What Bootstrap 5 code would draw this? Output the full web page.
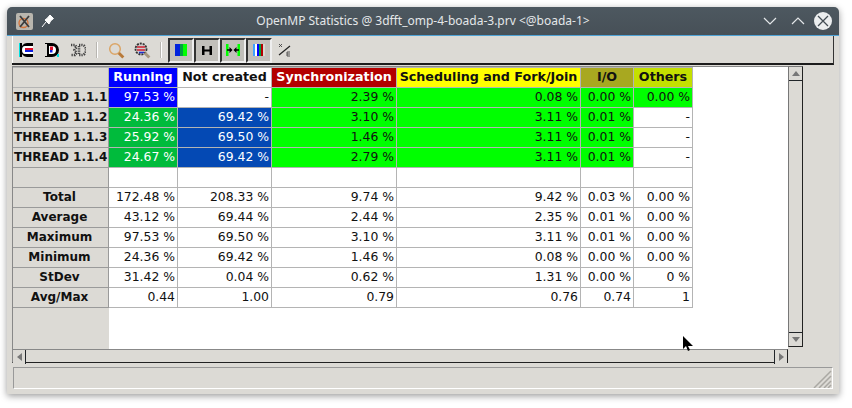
<!DOCTYPE html>
<html lang="en">
<head>
  <meta charset="UTF-8" />
  <title>OpenMP Statistics</title>
  <link href="https://cdn.jsdelivr.net/npm/bootstrap@5.3.0/dist/css/bootstrap.min.css" rel="stylesheet">
  <style>
    body { background: #fff; margin: 0; font-family: "DejaVu Sans", sans-serif; overflow: hidden; }
    .app-window { position: absolute; left: 7px; top: 7px; width: 832px; height: 387px; background: #dcdad5; border-radius: 5px 5px 0 0; box-shadow: 0 2px 7px rgba(0,0,0,.4); }
    .title-bar { position: relative; height: 29px; background: linear-gradient(#4d5860, #475057); border-bottom: 1px solid #4fa3d6; border-radius: 5px 5px 0 0; color: #e4e7e9; font-family: "Noto Sans", sans-serif; font-size: 12px; padding: 0 7px 0 9px; }
    .title-text { left: 0; right: 0; top: 6px; text-align: center; line-height: 16px; }
    .app-badge { width: 17px; height: 17px; background: #b9b6ae; border-radius: 2px; }
    .close-btn { width: 18px; height: 18px; background: #eceeef; border-radius: 50%; }
    .tool-bar { height: 29px; margin: 0 5px; padding: 2px 0 1px 1px; border-bottom: 2px solid #1c1c1c; border-right: 1px solid #333; box-shadow: inset 1px 0 #fff; }
    .tool-btn { width: 26px; height: 25px; }
    .tool-btn.on { background: #c1bfba; border: 2px solid #333; border-right-color: #eee; border-bottom-color: #eee; }
    .tool-sep { width: 2px; height: 16px; background: #b8b6b1; border-right: 1px solid #fff; margin: 0 5px; }
    .sep-wide { margin-right: 6px; }
    .stats-row { height: 283px; margin: 1px 0 0 5px; }
    .stats-pane { width: 776px; height: 283px; background: #fff; border-left: 1px solid #888; border-top: 1px solid #888; overflow: hidden; }
    .stats-grid { border-collapse: collapse; table-layout: fixed; width: 680px; margin-left: -1px; font-size: 12.4px; line-height: 15px; color: #111; }
    .stats-grid td, .stats-grid th { border: 1px solid #b4b4b4; height: 20px; padding: 0 2px 2px; white-space: nowrap; text-align: right; font-weight: 400; overflow: hidden; }
    .stats-grid th.head { text-align: center; font-weight: 700; font-size: 12.7px; padding: 0 0 3px; }
    .stats-grid th.side { background: #dcdad5; color: #111; font-weight: 700; font-size: 12px; text-align: left; padding: 0 0 0 1px; border-color: #f4f4f4 #9a9a9a #9a9a9a #f4f4f4; }
    .stats-grid th.side.mid { text-align: center; padding: 0 2px 0 0; }
    .stats-grid th.corner { background: #dcdad5; }
    .stats-grid tr.tail td, .stats-grid tr.tail th { border: 0; height: 42px; }
    .stats-grid tr.tail th { background: #dcdad5; }
    .c-run { background: #0000ff; color: #fff; }
    .c-not { background: #fff; color: #111; }
    .c-sync { background: #b30000; color: #fff; }
    .c-sched { background: #ffff00; color: #111; }
    .c-io { background: #a8a820; color: #111; }
    .c-other { background: #c4e000; color: #111; }
    .c-blue { background: #0000ff; color: #fff; }
    .c-teal { background: #00bb3c; color: #fff; }
    .c-navy { background: #0449b4; color: #fff; }
    .c-lime { background: #00ff00; color: #111; }
    .v-bar { width: 15px; height: 281px; background: #dcdad5; border: 1px solid #777; border-right-color: #222; border-bottom-color: #222; }
    .h-bar { width: 776px; height: 14px; margin-left: 5px; background: #dcdad5; border: 1px solid #888; border-bottom: 1px solid #222; border-right-color: #222; }
    .bar-end { width: 13px; height: 14px; background: #dcdad5; }
    .arrow-up { width: 0; height: 0; border: 4px solid transparent; border-top: 0; border-bottom: 5px solid #777; }
    .arrow-down { width: 0; height: 0; border: 4px solid transparent; border-bottom: 0; border-top: 5px solid #777; }
    .arrow-left { width: 0; height: 0; border: 4px solid transparent; border-left: 0; border-right: 5px solid #777; }
    .arrow-right { width: 0; height: 0; border: 4px solid transparent; border-right: 0; border-left: 5px solid #777; }
    .status-bar { height: 22px; margin: 4px 6px 0 6px; border: 1px solid #999; border-right-color: #fff; border-bottom-color: #fff; position: relative; }
    .grip { position: absolute; right: 0; bottom: 0; }
    .mouse-ptr { position: absolute; left: 683px; top: 336px; }
  </style>
</head>
<body>
  <div class="app-window">
    <div class="title-bar d-flex align-items-center">
      <span class="title-text position-absolute">OpenMP Statistics @ 3dfft_omp-4-boada-3.prv &lt;@boada-1&gt;</span>
      <span class="app-badge d-flex align-items-center justify-content-center">
        <svg width="15" height="15" viewBox="0 0 15 15"><circle cx="6.500" cy="9" r="4.500" fill="none" stroke="#d8743a" stroke-width="1.300"/><path d="M3 2l9 11M12 2L3 13" stroke="#3c3c3c" stroke-width="1.800"/></svg>
      </span>
      <svg class="ms-2" width="14" height="14" viewBox="0 0 14 14"><path d="M1 13l4-5M4 6l4 4 1.500-3 3-2.500L9 1 6.500 4z" fill="#fff" stroke="#fff" stroke-linejoin="round"/></svg>
      <span class="ms-auto d-flex align-items-center gap-2">
        <svg width="16" height="10" viewBox="0 0 16 10"><path d="M2 2l6 6 6-6" fill="none" stroke="#e4e7e9" stroke-width="1.200"/></svg>
        <svg class="ms-1" width="16" height="10" viewBox="0 0 16 10"><path d="M2 8l6-6 6 6" fill="none" stroke="#e4e7e9" stroke-width="1.200"/></svg>
        <span class="close-btn d-flex align-items-center justify-content-center">
          <svg width="12" height="12" viewBox="0 0 12 12"><path d="M1 1l10 10M11 1L1 11" stroke="#444d54" stroke-width="1.300"/></svg>
        </span>
      </span>
    </div>

    <div class="tool-bar d-flex align-items-center">
      <span class="tool-btn d-flex align-items-center justify-content-center">
        <svg width="14" height="14" viewBox="0 0 14 14"><path d="M0 0h1v14H0z" fill="#00e0e0"/><path d="M1 0h2v14H1z" fill="#000"/><path d="M14 0H8a6 7 0 0 0 0 14h6v-3H8.500a3 4 0 0 1 0-8H14z" fill="#000"/><path d="M6 3h8v8H6a3 4 0 0 1 0-8z" fill="#fff"/><path d="M6 5h8v2H6z" fill="#e0102a"/><path d="M6 7h8v2H6z" fill="#1020e0"/></svg>
      </span>
      <span class="tool-btn d-flex align-items-center justify-content-center">
        <svg width="14" height="14" viewBox="0 0 14 14"><path d="M0 0h7a7 7 0 0 1 0 14H0v-1h2V1H0z" fill="#000"/><path d="M4 3h3a4 4 0 0 1 0 8H4z" fill="#fff"/><path d="M5 3.500h3v3.500H5z" fill="#e0102a"/><path d="M5 7h2.500v2.500H5z" fill="#1020e0"/><path d="M12 11h2v3h-2z" fill="#00e0e0"/></svg>
      </span>
      <span class="tool-btn d-flex align-items-center justify-content-center">
        <svg width="16" height="14" viewBox="0 0 16 14"><path d="M1 2h4l1.500 2-2 3 2 3L5 12H1M9 2h3a4 5 0 0 1 0 10H9z" fill="none" stroke="#444" stroke-width="2.600" stroke-dasharray="1.300 1"/></svg>
      </span>
      <span class="tool-sep"></span>
      <span class="tool-btn d-flex align-items-center justify-content-center">
        <svg width="17" height="17" viewBox="0 0 17 17"><circle cx="7" cy="7" r="5.300" fill="none" stroke="#dba566" stroke-width="1.500"/><path d="M10.800 11l4.500 4.500" stroke="#b87a3a" stroke-width="3"/></svg>
      </span>
      <span class="tool-btn d-flex align-items-center justify-content-center">
        <svg width="17" height="17" viewBox="0 0 17 17"><circle cx="7" cy="7" r="5.500" fill="#cfcfcf" stroke="#333" stroke-width="1.800" stroke-dasharray="2 1"/><path d="M3 5h8M3 8h8" stroke="#d02030" stroke-width="1.500"/><path d="M5 10.500h5" stroke="#2030d0" stroke-width="1.500"/><path d="M10.800 11l4.500 4.500" stroke="#a89880" stroke-width="3"/></svg>
      </span>
      <span class="tool-sep sep-wide"></span>
      <span class="tool-btn on d-flex align-items-center justify-content-center">
        <svg width="12" height="12" viewBox="0 0 12 12"><path d="M0 0h5v12H0z" fill="#0022dd"/><path d="M5 0h3v12H5z" fill="#00a040"/><path d="M8 0h4v12H8z" fill="#00ff00"/></svg>
      </span>
      <span class="tool-btn on d-flex align-items-center justify-content-center">
        <svg width="10" height="9" viewBox="0 0 10 9"><path d="M0 0h2.500v3.500h5V0H10v9H7.500V5.500h-5V9H0z" fill="#000"/></svg>
      </span>
      <span class="tool-btn on d-flex align-items-center justify-content-center">
        <svg width="14" height="12" viewBox="0 0 14 12"><path d="M0 0h2.500v12H0zM11.500 0H14v12h-2.500z" fill="#00ff00"/><path d="M1 6h4M13 6H9" stroke="#000" stroke-width="1.300"/><path d="M3.500 3l3 3-3 3zM10.500 3l-3 3 3 3z" fill="#000"/></svg>
      </span>
      <span class="tool-btn on d-flex align-items-center justify-content-center">
        <svg width="12" height="12" viewBox="0 0 12 12"><path d="M0 0h2v12H0z" fill="#40a0ff"/><path d="M2 0h2v12H2z" fill="#fff"/><path d="M4 0h2v12H4z" fill="#0000ff"/><path d="M6 0h2v12H6z" fill="#00a040"/><path d="M8 0h2v12H8z" fill="#b30000"/><path d="M10 0h2v12h-2z" fill="#d8d8d0"/></svg>
      </span>
      <span class="tool-btn d-flex align-items-center justify-content-center">
        <svg width="14" height="14" viewBox="0 0 14 14"><path d="M1 12L12 3" stroke="#222" stroke-width="1.200"/><path d="M1 1l3 3M4 1L1 4M9 9h3M9 11h3M9 13h3M9 9v4" fill="none" stroke="#444" stroke-width=".9"/></svg>
      </span>
    </div>

    <div class="stats-row d-flex">
      <div class="stats-pane">
        <table class="stats-grid">
          <colgroup><col style="width:96px"><col style="width:69px"><col style="width:94px"><col style="width:125px"><col style="width:184px"><col style="width:53px"><col style="width:59px"></colgroup>
          <tr>
            <th class="corner"></th>
            <th class="head c-run">Running</th><th class="head c-not">Not created</th><th class="head c-sync">Synchronization</th><th class="head c-sched">Scheduling and Fork/Join</th><th class="head c-io">I/O</th><th class="head c-other">Others</th>
          </tr>
          <tr><th class="side">THREAD 1.1.1</th><td class="c-blue">97.53 %</td><td>-</td><td class="c-lime">2.39 %</td><td class="c-lime">0.08 %</td><td class="c-lime">0.00 %</td><td class="c-lime">0.00 %</td></tr>
          <tr><th class="side">THREAD 1.1.2</th><td class="c-teal">24.36 %</td><td class="c-navy">69.42 %</td><td class="c-lime">3.10 %</td><td class="c-lime">3.11 %</td><td class="c-lime">0.01 %</td><td>-</td></tr>
          <tr><th class="side">THREAD 1.1.3</th><td class="c-teal">25.92 %</td><td class="c-navy">69.50 %</td><td class="c-lime">1.46 %</td><td class="c-lime">3.11 %</td><td class="c-lime">0.01 %</td><td>-</td></tr>
          <tr><th class="side">THREAD 1.1.4</th><td class="c-teal">24.67 %</td><td class="c-navy">69.42 %</td><td class="c-lime">2.79 %</td><td class="c-lime">3.11 %</td><td class="c-lime">0.01 %</td><td>-</td></tr>
          <tr><th class="side"></th><td></td><td></td><td></td><td></td><td></td><td></td></tr>
          <tr><th class="side mid">Total</th><td>172.48 %</td><td>208.33 %</td><td>9.74 %</td><td>9.42 %</td><td>0.03 %</td><td>0.00 %</td></tr>
          <tr><th class="side mid">Average</th><td>43.12 %</td><td>69.44 %</td><td>2.44 %</td><td>2.35 %</td><td>0.01 %</td><td>0.00 %</td></tr>
          <tr><th class="side mid">Maximum</th><td>97.53 %</td><td>69.50 %</td><td>3.10 %</td><td>3.11 %</td><td>0.01 %</td><td>0.00 %</td></tr>
          <tr><th class="side mid">Minimum</th><td>24.36 %</td><td>69.42 %</td><td>1.46 %</td><td>0.08 %</td><td>0.00 %</td><td>0.00 %</td></tr>
          <tr><th class="side mid">StDev</th><td>31.42 %</td><td>0.04 %</td><td>0.62 %</td><td>1.31 %</td><td>0.00 %</td><td>0 %</td></tr>
          <tr><th class="side mid">Avg/Max</th><td>0.44</td><td>1.00</td><td>0.79</td><td>0.76</td><td>0.74</td><td>1</td></tr>
          <tr class="tail"><th></th><td colspan="6"></td></tr>
        </table>
      </div>
      <div class="v-bar d-flex flex-column justify-content-between">
        <span class="bar-end d-flex align-items-center justify-content-center border-bottom border-dark"><span class="arrow-up"></span></span>
        <span class="bar-end d-flex align-items-center justify-content-center border-top border-dark"><span class="arrow-down"></span></span>
      </div>
    </div>
    <div class="h-bar d-flex justify-content-between">
      <span class="bar-end d-flex align-items-center justify-content-center border-end border-dark"><span class="arrow-left"></span></span>
      <span class="bar-end d-flex align-items-center justify-content-center border-start border-dark"><span class="arrow-right"></span></span>
    </div>
    <div class="status-bar">
      <svg class="grip" width="22" height="21" viewBox="0 0 22 21"><path d="M21 4L4 21M21 9L9 21M21 14L14 21M21 18l-3 3" stroke="#aaa8a3" stroke-width="1.500"/></svg>
    </div>
  </div>
  <svg class="mouse-ptr" width="12" height="17" viewBox="0 0 12 17"><path d="M0 0v13l3-3 2 5 2-1-2-4h5z" fill="#000"/></svg>
  <script src="https://cdn.jsdelivr.net/npm/bootstrap@5.3.0/dist/js/bootstrap.bundle.min.js"></script>
</body>
</html>
